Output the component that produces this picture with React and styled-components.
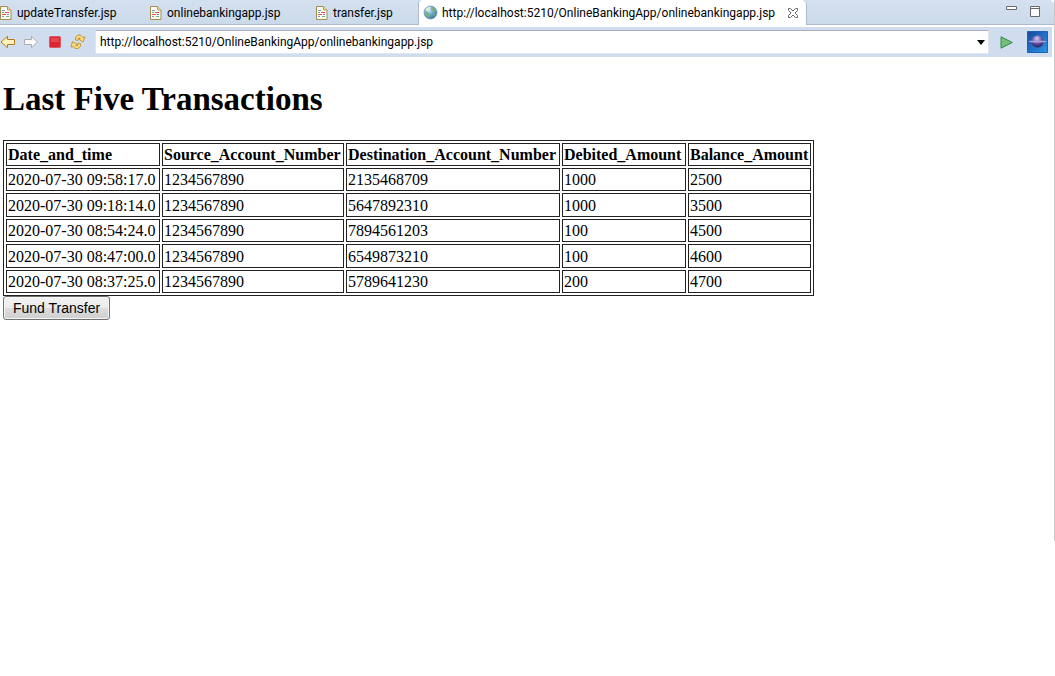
import React from "react";
import styled, { createGlobalStyle } from "styled-components";

const GlobalStyle = createGlobalStyle`
  * { box-sizing: border-box; }
  body { margin: 0; background: #fff; color: #000; }
  svg { flex: none; }
`;
const ui = `Roboto, "Noto Sans", sans-serif`;

const Shell = styled.div`
  min-height: 541px;
  border-right: 1px solid #c8c8c8;
`;
const TabBar = styled.div`
  display: flex;
  height: 25px;
  border-top-right-radius: 5px;
  background: linear-gradient(#d3e0ef, #cbdaea);
`;
const TabList = styled.div`
  display: flex;
  flex: none;
`;
const Tab = styled.button`
  display: flex;
  align-items: center;
  gap: 5px;
  width: ${(p) => p.$width}px;
  height: 25px;
  padding: 1px 0 0;
  border: 0;
  border-bottom: 1px solid #b0b9cf;
  background: transparent;
  color: #000;
  font: 12px/16px ${ui};
  text-align: left;
  white-space: nowrap;
`;
const ActiveTab = styled.div`
  display: flex;
  align-items: center;
  gap: 4px;
  width: 389px;
  padding: 0 1px 0 4px;
  border: 1px solid #b0b9cf;
  border-width: 0 1px;
  border-radius: 4px 5px 0 0;
  background: #fff;
  font: 12px/16px ${ui};
  white-space: nowrap;
`;
const ActiveLabel = styled.span`
  flex: 1;
`;
const IconButton = styled.button`
  display: flex;
  align-items: center;
  justify-content: center;
  flex: none;
  width: ${(p) => p.$width || 24}px;
  height: 24px;
  padding: 0;
  border: 0;
  background: transparent;
`;
const WindowControls = styled.div`
  display: flex;
  flex: 1;
  justify-content: flex-end;
  padding-right: 7px;
  border-bottom: 1px solid #b0b9cf;
`;
const Toolbar = styled.form`
  display: flex;
  align-items: center;
  height: 32px;
  margin-right: 2px;
  padding: 2px 2px 2px 0;
  border-top: 2px solid #fff;
  background: #cfddee;
`;
const AddressBox = styled.div`
  display: flex;
  align-items: center;
  flex: 1;
  height: 24px;
  margin-left: 3px;
  border: 1px solid #e1e6ee;
  border-top-color: #abadb8;
  border-radius: 2px;
  background: #fff;
`;
const Address = styled.input`
  flex: 1;
  min-width: 0;
  padding: 0 4px;
  border: 0;
  outline: 0;
  background: transparent;
  color: #000;
  font: 12px/16px ${ui};
`;
const Page = styled.main`
  padding: 24px 3px;
  font: 16px/19px "Liberation Serif", serif;
`;
const Title = styled.h1`
  margin: 0 0 22px;
  font-size: 33px;
  line-height: 37px;
`;
const Table = styled.table`
  border: 1px solid #222;
  border-collapse: separate;
  border-spacing: 2px;
`;
const Row = styled.tr`
  height: 23px;
  &:nth-child(even) { height: 24px; }
`;
const Head = styled.th`
  width: ${(p) => p.$width}px;
  padding: 1px;
  border: 1px solid #222;
  text-align: left;
  white-space: nowrap;
`;
const Cell = styled.td`
  padding: 1px;
  border: 1px solid #222;
  white-space: nowrap;
`;
const TransferButton = styled.button`
  display: block;
  width: 107px;
  height: 24px;
  padding: 0;
  border: 1px solid #707070;
  border-radius: 3px;
  background: linear-gradient(#f2f2f2, #ebebeb 50%, #dddddd 50%, #cfcfcf);
  box-shadow: inset 0 0 0 1px #f6f6f6;
  color: #000;
  font: 14px/20px "Liberation Sans", sans-serif;
`;

const FileIcon = () => (
  <svg width="12" height="16" viewBox="0 0 12 16" aria-hidden="true">
    <path d="M.5 1.500h7l3.500 3.500v9.500H.5z" fill="#fdfdf4" stroke="#a58b50" />
    <path d="M7.500 1.500V5H11" fill="#ecdca8" stroke="#b79a55" />
    <path d="M2 5.500h3M2 11.500h2" stroke="#7d92cc" />
    <path d="M2 7.500h2M6 11.500h3" stroke="#67b582" />
    <path d="M5 7.500h4M2 9.500h4" stroke="#e8505e" />
    <path d="M7 9.500h2" stroke="#6d86cc" />
  </svg>
);
const GlobeIcon = () => (
  <svg width="15" height="15" viewBox="0 0 15 15" aria-hidden="true">
    <defs>
      <radialGradient id="sea" cx=".35" cy=".3" r=".8">
        <stop offset="0" stopColor="#d8edf8" />
        <stop offset=".5" stopColor="#6aaad4" />
        <stop offset="1" stopColor="#2f669a" />
      </radialGradient>
    </defs>
    <circle cx="7.500" cy="7.500" r="6.500" fill="url(#sea)" stroke="#6c93ad" strokeWidth=".7" />
    <path d="M8 2c3 0 5 2 5 4l-2 1-2-1-1-2zM2 6l3 1 2 3-1 3-3-2zM10 9l3-1-2 4z" fill="#7fb06c" opacity=".8" />
    <path d="M3 3q3-2 5-1L6 5 3 6z" fill="#e3eee4" opacity=".8" />
  </svg>
);
const CloseIcon = () => (
  <svg width="12" height="12" viewBox="0 0 12 12" aria-hidden="true">
    <path d="M1.500 1.500h2L6 4l2.500-2.500h2v2L8 6l2.500 2.500v2h-2L6 8l-2.500 2.500h-2v-2L4 6 1.500 3.500z" fill="#fff" stroke="#686868" />
  </svg>
);
const ArrowIcon = ({ forward }) => (
  <svg width="16" height="14" viewBox="0 0 16 14" aria-hidden="true">
    {forward ? (
      <path d="M1.500 4.500h7V1.300L14.500 7l-6 5.700V9.500h-7z" fill="#f8f8f8" stroke="#adadad" strokeLinejoin="round" />
    ) : (
      <path d="M14.500 4.500h-7V1.300L1 7l6.500 5.700V9.500h7z" fill="#fff2bd" stroke="#b77b1c" strokeLinejoin="round" />
    )}
  </svg>
);
const StopIcon = () => (
  <svg width="12" height="12" viewBox="0 0 12 12" aria-hidden="true">
    <rect x=".5" y=".5" width="11" height="11" rx="1" fill="#de2534" stroke="#d55c62" />
    <path d="M2 2h8v4H2z" fill="#ea4652" />
  </svg>
);
const RefreshIcon = () => (
  <svg width="16" height="16" viewBox="0 0 16 16" aria-hidden="true">
    <g fill="#fbdc7c" stroke="#b98425" strokeWidth=".8" strokeLinejoin="round">
      <path d="M5.500 6Q4.500 2.500 8 1q3-.8 4.800 2.400L15 3l-2 5-4.500-3 1.800-.6Q8 2.600 7.700 6.500z" />
      <path d="M10.500 9.500q1 3.500-2.500 5-3 .8-4.800-1.900L1 13l1.500-5.500L7.500 10.500l-1.800.9Q8 13 8.300 9z" />
    </g>
  </svg>
);
const MinimizeIcon = () => (
  <svg width="11" height="24" viewBox="0 0 11 24" aria-hidden="true">
    <path d="M.5 6.500h10v3H.5z" fill="#fff" stroke="#686868" />
  </svg>
);
const MaximizeIcon = () => (
  <svg width="10" height="24" viewBox="0 0 10 24" aria-hidden="true">
    <path d="M.5 6.500h9v10h-9zM.5 8.500h9" fill="#fff" stroke="#686868" />
  </svg>
);
const DropIcon = () => (
  <svg width="8" height="5" viewBox="0 0 8 5" aria-hidden="true">
    <path d="M0 0h8L4 5z" fill="#000" />
  </svg>
);
const GoIcon = () => (
  <svg width="13" height="13" viewBox="0 0 13 13" aria-hidden="true">
    <path d="M1 .8l11.300 5.700L1 12.200z" fill="#74bf78" stroke="#36894b" strokeLinejoin="round" />
  </svg>
);
const BrandIcon = () => (
  <svg width="21" height="22" viewBox="0 0 21 22" aria-hidden="true">
    <defs>
      <linearGradient id="brandBack" x2="1" y2="1">
        <stop stopColor="#1749a0" />
        <stop offset="1" stopColor="#2c94e8" />
      </linearGradient>
      <radialGradient id="brandBall" cx=".45" cy=".25" r=".8">
        <stop stopColor="#d8cef0" />
        <stop offset=".5" stopColor="#6a52a4" />
        <stop offset="1" stopColor="#211653" />
      </radialGradient>
    </defs>
    <path d="M.5.5h20v21H.5z" fill="url(#brandBack)" stroke="#1a64b8" />
    <circle cx="10.500" cy="10.500" r="6" fill="url(#brandBall)" />
    <ellipse cx="10.500" cy="10.500" rx="9" ry="1" fill="#a9a4dc" />
  </svg>
);

const columns = [
  ["Date_and_time", 154],
  ["Source_Account_Number", 182],
  ["Destination_Account_Number", 214],
  ["Debited_Amount", 124],
  ["Balance_Amount", 123],
];
const rows = [
  ["2020-07-30 09:58:17.0", "1234567890", "2135468709", "1000", "2500"],
  ["2020-07-30 09:18:14.0", "1234567890", "5647892310", "1000", "3500"],
  ["2020-07-30 08:54:24.0", "1234567890", "7894561203", "100", "4500"],
  ["2020-07-30 08:47:00.0", "1234567890", "6549873210", "100", "4600"],
  ["2020-07-30 08:37:25.0", "1234567890", "5789641230", "200", "4700"],
];
const url = "http://localhost:5210/OnlineBankingApp/onlinebankingapp.jsp";

export default function App() {
  return (
    <Shell>
      <GlobalStyle />
      <TabBar>
        <TabList>
          <Tab $width={150}><FileIcon />updateTransfer.jsp</Tab>
          <Tab $width={166}><FileIcon />onlinebankingapp.jsp</Tab>
          <Tab $width={102}><FileIcon />transfer.jsp</Tab>
          <ActiveTab>
            <GlobeIcon />
            <ActiveLabel>{url}</ActiveLabel>
            <IconButton aria-label="Close tab"><CloseIcon /></IconButton>
          </ActiveTab>
        </TabList>
        <WindowControls>
          <IconButton aria-label="Minimize"><MinimizeIcon /></IconButton>
          <IconButton aria-label="Maximize"><MaximizeIcon /></IconButton>
        </WindowControls>
      </TabBar>
      <Toolbar onSubmit={(e) => e.preventDefault()}>
        <IconButton type="button" $width={16} aria-label="Back"><ArrowIcon /></IconButton>
        <IconButton type="button" $width={30} aria-label="Forward"><ArrowIcon forward /></IconButton>
        <IconButton type="button" $width={18} aria-label="Stop"><StopIcon /></IconButton>
        <IconButton type="button" $width={28} aria-label="Refresh"><RefreshIcon /></IconButton>
        <AddressBox>
          <Address aria-label="Address" defaultValue={url} />
          <IconButton type="button" $width={14} aria-label="Show history"><DropIcon /></IconButton>
        </AddressBox>
        <IconButton type="submit" $width={35} aria-label="Go"><GoIcon /></IconButton>
        <IconButton type="button" $width={26} aria-label="Browser home"><BrandIcon /></IconButton>
      </Toolbar>
      <Page>
        <Title>Last Five Transactions</Title>
        <Table>
          <thead>
            <Row>
              {columns.map(([name, width]) => <Head key={name} $width={width} scope="col">{name}</Head>)}
            </Row>
          </thead>
          <tbody>
            {rows.map((row) => (
              <Row key={row[0]}>
                {row.map((value, i) => <Cell key={columns[i][0]}>{value}</Cell>)}
              </Row>
            ))}
          </tbody>
        </Table>
        <TransferButton type="button">Fund Transfer</TransferButton>
      </Page>
    </Shell>
  );
}
